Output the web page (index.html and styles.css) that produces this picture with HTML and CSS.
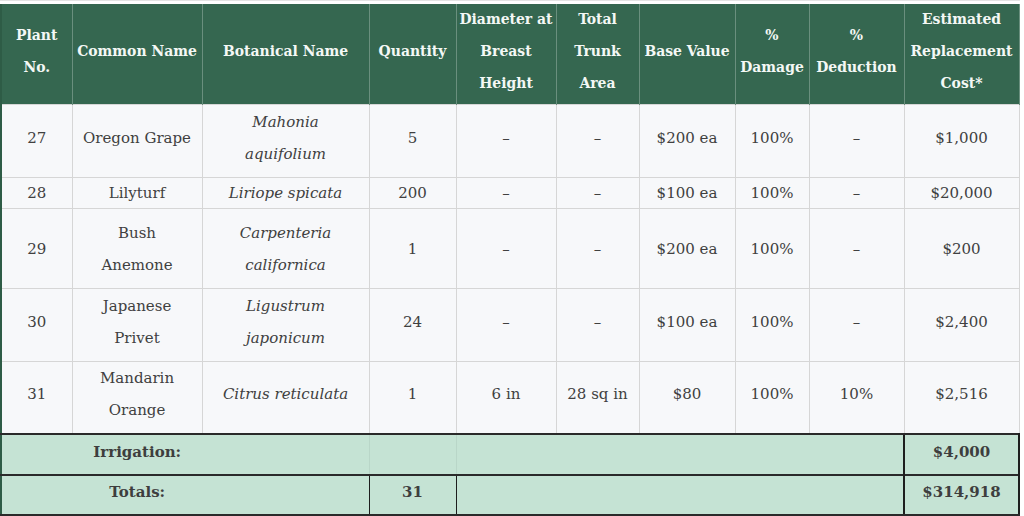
FILE: index.html
```html
<!DOCTYPE html>
<html>
<head>
<meta charset="utf-8">
<link rel="stylesheet" href="styles.css">
</head>
<body>
<div class="wrap">
<table class="plants">
  <colgroup>
    <col class="c1"><col class="c2"><col class="c3"><col class="c4"><col class="c5">
    <col class="c6"><col class="c7"><col class="c8"><col class="c9"><col class="c10">
  </colgroup>
  <thead>
    <tr class="head">
      <th><div class="hd">Plant<br>No.</div></th>
      <th><div class="hd">Common Name</div></th>
      <th><div class="hd">Botanical Name</div></th>
      <th><div class="hd">Quantity</div></th>
      <th><div class="hd">Diameter at<br>Breast<br>Height</div></th>
      <th><div class="hd">Total<br>Trunk<br>Area</div></th>
      <th><div class="hd">Base Value</div></th>
      <th><div class="hd">%<br>Damage</div></th>
      <th><div class="hd">%<br>Deduction</div></th>
      <th><div class="hd">Estimated<br>Replacement<br>Cost*</div></th>
    </tr>
  </thead>
  <tbody>
    <tr class="r27">
      <td>27</td><td>Oregon Grape</td><td class="bot">Mahonia<br>aquifolium</td><td>5</td><td>–</td><td>–</td><td>$200 ea</td><td>100%</td><td>–</td><td>$1,000</td>
    </tr>
    <tr class="r28">
      <td>28</td><td>Lilyturf</td><td class="bot">Liriope spicata</td><td>200</td><td>–</td><td>–</td><td>$100 ea</td><td>100%</td><td>–</td><td>$20,000</td>
    </tr>
    <tr class="r29">
      <td>29</td><td>Bush<br>Anemone</td><td class="bot">Carpenteria<br>californica</td><td>1</td><td>–</td><td>–</td><td>$200 ea</td><td>100%</td><td>–</td><td>$200</td>
    </tr>
    <tr class="r30">
      <td>30</td><td>Japanese<br>Privet</td><td class="bot">Ligustrum<br>japonicum</td><td>24</td><td>–</td><td>–</td><td>$100 ea</td><td>100%</td><td>–</td><td>$2,400</td>
    </tr>
    <tr class="r31">
      <td>31</td><td>Mandarin<br>Orange</td><td class="bot">Citrus reticulata</td><td>1</td><td>6 in</td><td>28 sq in</td><td>$80</td><td>100%</td><td>10%</td><td>$2,516</td>
    </tr>
  </tbody>
  <tfoot>
    <tr class="irr">
      <td colspan="3" class="label">Irrigation:</td>
      <td class="faint"></td>
      <td colspan="5" class="faint"></td>
      <td class="total">$4,000</td>
    </tr>
    <tr class="tot">
      <td colspan="3" class="label">Totals:</td>
      <td>31</td>
      <td colspan="5"></td>
      <td class="total">$314,918</td>
    </tr>
  </tfoot>
</table>
</div>
</body>
</html>
```

FILE: styles.css
```css
html, body {
  margin: 0;
  padding: 0;
  background: #ffffff;
}
.wrap {
  padding-top: 3px;
  border-top: 1px solid #e4e4e4;
  width: 1020px;
}
.plants {
  border-collapse: collapse;
  table-layout: fixed;
  width: 1020px;
  font-family: "DejaVu Serif", "Liberation Serif", serif;
  font-size: 15px;
  color: #404040;
  border-left: 2px solid #2e5c46;
}
.c1 { width: 71px; }
.c2 { width: 130px; }
.c3 { width: 167px; }
.c4 { width: 87px; }
.c5 { width: 100px; }
.c6 { width: 83px; }
.c7 { width: 96px; }
.c8 { width: 74px; }
.c9 { width: 95px; }
.c10 { width: 115px; }

.head th {
  background: #356750;
  color: #f4f8f5;
  font-family: "DejaVu Serif Condensed", "DejaVu Serif", serif;
  font-stretch: condensed;
  font-weight: bold;
  font-size: 15.5px;
  line-height: 32px;
  height: 99px;
  padding: 0;
  text-align: center;
  vertical-align: middle;
  border-left: 1px solid #6a8f7e;
  border-right: 1px solid #6a8f7e;
  border-top: 1px solid #356750;
}
.head th:first-child { border-left: none; }
.hd { margin-top: -8px; }

tbody td {
  background: #f7f8fa;
  border: 1px solid #d6d6d6;
  text-align: center;
  vertical-align: middle;
  line-height: 32px;
  padding: 0 0 7px 0;
}
tbody td:first-child { border-left: none; }
tbody td.bot { font-style: italic; }
.r27 td { height: 65px; }
.r28 td { height: 30px; line-height: 29px; padding-bottom: 0; }
.r29 td { height: 79px; padding-bottom: 0; }
.r30 td { height: 65px; }
.r31 td { height: 62px; }

tfoot td {
  background: #c5e3d4;
  border: 1px solid #1e1e1e;
  border-top: 2px solid #2a2a2a;
  font-weight: bold;
  text-align: center;
  vertical-align: middle;
  padding: 0 0 6px 0;
  color: #3e3e3e;
}
tfoot td:first-child { border-left: none; }
.irr td { height: 33px; }
.tot td { height: 32px; }
.irr td.faint { border-left: 1px solid #b9d6c8; border-right: 1px solid #b9d6c8; }
.irr td.label { border-right: 1px solid #b9d6c8; }
tfoot td.label { padding-right: 96px; }
tfoot td.total { border-left: 2px solid #1e1e1e; border-right: 2px solid #1e1e1e; }
.tot td { border-bottom: 2px solid #2a2a2a; }
```
